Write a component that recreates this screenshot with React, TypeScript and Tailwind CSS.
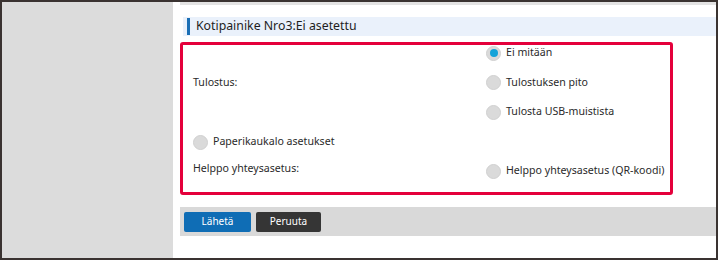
function Radio({ checked = false }: { checked?: boolean }) {
  return (
    <span className="w-[15px] h-[15px] rounded-full bg-[#dadada] border border-[#d0d0d0] flex items-center justify-center shrink-0">
      {checked && <span className="w-[8px] h-[8px] rounded-full bg-[#14a3d9]" />}
    </span>
  );
}

function Option({ label, checked }: { label: string; checked?: boolean }) {
  return (
    <div className="h-4 flex items-center gap-[5px] whitespace-nowrap">
      <Radio checked={checked} />
      <span>{label}</span>
    </div>
  );
}

export default function App() {
  return (
    <div
      className="w-[718px] h-[260px] border-2 border-[#3a3331] flex bg-white text-[#2a2a2a] text-[10.6px]"
      style={{ fontFamily: '"Noto Sans", "Open Sans", sans-serif' }}
    >
      <aside className="w-[171px] bg-[#dcdcdc]" />
      <main className="flex-1 flex flex-col">
        <div className="h-[3px] ml-[7px] bg-[#e3e3e3]" />
        <div className="mt-[12px] ml-[10px] h-[19px] bg-[#eaf1fb] flex items-center pl-[4px]">
          <span className="w-[3px] h-[17px] bg-[#1b6fb5]" />
          <span className="ml-[6px] text-[12.3px] text-[#1e1e1e]">
            Kotipainike Nro3:Ei asetettu
          </span>
        </div>
        <div className="mt-[6px] ml-[7px] w-[493px] h-[153px] border-[3px] border-[#e4003b] rounded-[3px] flex flex-col pl-[10px]">
          <div className="flex">
            <div className="w-[293px] shrink-0 flex items-center">Tulostus:</div>
            <div className="flex flex-col gap-[13.5px]">
              <Option label="Ei mitään" checked />
              <Option label="Tulostuksen pito" />
              <Option label="Tulosta USB-muistista" />
            </div>
          </div>
          <div className="mt-[14px]">
            <Option label="Paperikaukalo asetukset" />
          </div>
          <div className="flex mt-[11px]">
            <div className="w-[293px] shrink-0 h-4 flex items-start">Helppo yhteysasetus:</div>
            <div className="mt-[2px]">
              <Option label="Helppo yhteysasetus (QR-koodi)" />
            </div>
          </div>
        </div>
        <div className="mt-[12px] ml-[7px] h-[29px] bg-[#d9d9d9] flex items-center gap-[5px] pl-[4px]">
          <button className="w-[67px] h-[20px] rounded-[2px] bg-[#0f6db5] text-white text-[10px]">
            Lähetä
          </button>
          <button className="w-[65px] h-[20px] rounded-[2px] bg-[#353535] text-white text-[10px]">
            Peruuta
          </button>
        </div>
      </main>
    </div>
  );
}
